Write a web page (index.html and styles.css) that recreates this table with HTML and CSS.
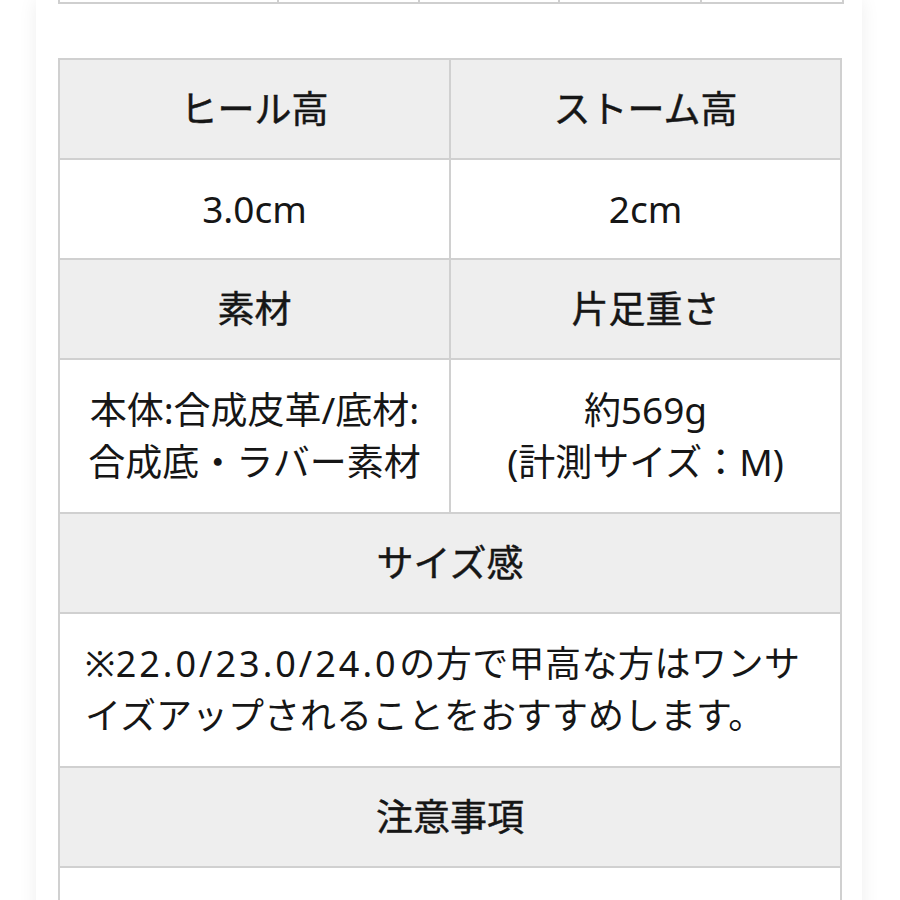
FILE: index.html
```html
<!DOCTYPE html>
<html lang="ja">
<head>
<meta charset="utf-8">
<title>商品詳細</title>
<link rel="stylesheet" href="styles.css">
</head>
<body>
<div class="card">
  <table class="size-table">
    <tr>
      <td class="c1"></td><td class="c2"></td><td class="c3"></td><td class="c4"></td><td class="c5"></td>
    </tr>
  </table>
  <table class="spec">
    <tr>
      <th class="half">ヒール高</th>
      <th class="half">ストーム高</th>
    </tr>
    <tr>
      <td>3.0cm</td>
      <td>2cm</td>
    </tr>
    <tr>
      <th>素材</th>
      <th>片足重さ</th>
    </tr>
    <tr>
      <td class="two">本体:合成皮革/底材:<br>合成底・ラバー素材</td>
      <td class="two">約569g<br>(計測サイズ：M)</td>
    </tr>
    <tr>
      <th colspan="2">サイズ感</th>
    </tr>
    <tr>
      <td colspan="2" class="left two">※<span class="num">22.0/23.0/24.0</span>の方で甲高な方はワンサイズアップされることをおすすめします。</td>
    </tr>
    <tr>
      <th colspan="2">注意事項</th>
    </tr>
    <tr>
      <td colspan="2" class="left">&nbsp;</td>
    </tr>
  </table>
</div>
</body>
</html>
```
FILE: styles.css
```css
html, body {
  margin: 0;
  padding: 0;
  background: #ffffff;
}
body {
  font-family: "Noto Sans", "Noto Sans CJK JP", sans-serif;
  color: #161616;
}
.card {
  margin-left: 36px;
  width: 784px;
  padding: 0 20px 40px 22px;
  background: #ffffff;
  box-shadow: 0 0 18px rgba(0, 0, 0, 0.07);
  min-height: 900px;
}
.size-table {
  border-collapse: collapse;
  width: 784px;
  table-layout: fixed;
}
.size-table td {
  height: 2px;
  padding: 0;
  border: 2px solid #cfcfcf;
  border-top: none;
}
.size-table .c1 { width: 217px; }
.size-table .c2 { width: 139px; }
.size-table .c3 { width: 138px; }
.size-table .c4 { width: 140px; }
.size-table .c5 { width: 140px; }
.spec {
  margin-top: 54px;
  width: 784px;
  border-collapse: collapse;
  table-layout: fixed;
  font-size: 37px;
  line-height: 52px;
}
.spec th, .spec td {
  border: 2px solid #d0d0d0;
  padding: 23px 20px;
  text-align: center;
  vertical-align: middle;
}
.spec td.two {
  padding-top: 24px;
  padding-bottom: 24px;
}
.spec th {
  background: #eeeeee;
  font-weight: 400;
  -webkit-text-stroke: 0.45px #161616;
}
.spec td {
  font-weight: 400;
}
.spec th.half {
  width: 50%;
}
.spec td.left {
  text-align: justify;
  padding-left: 25px;
  padding-right: 40px;
  font-size: 36px;
}
.spec .num {
  letter-spacing: 3px;
}
```
